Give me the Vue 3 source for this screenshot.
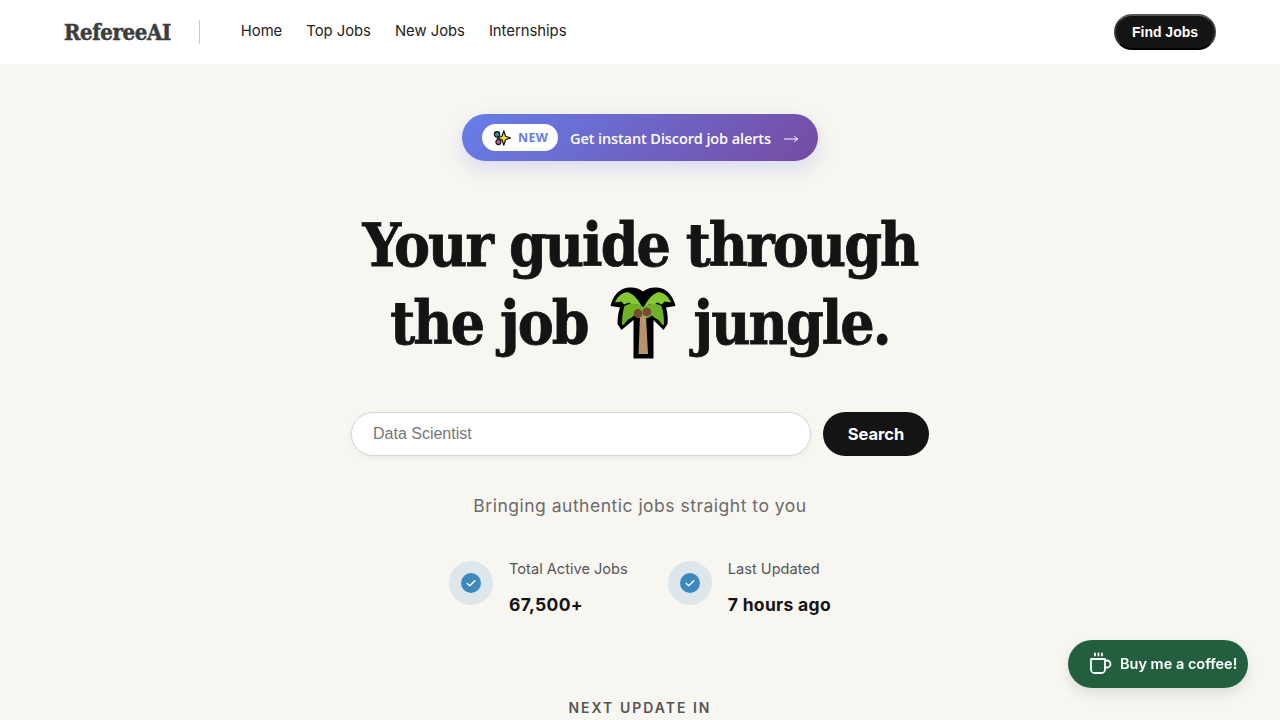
<script setup>
const links = ['Home', 'Top Jobs', 'New Jobs', 'Internships']
const stats = [
  { label: 'Total Active Jobs', value: '67,500+' },
  { label: 'Last Updated', value: '7 hours ago' }
]
</script>

<template>
  <div class="page">
    <header class="topbar">
      <div class="left">
        <span class="logo">RefereeAI</span>
        <span class="divider"></span>
        <nav class="links">
          <a v-for="link in links" :key="link" href="#">{{ link }}</a>
        </nav>
      </div>
      <button class="find-btn">Find Jobs</button>
    </header>

    <main class="hero">
      <a class="promo" href="#">
        <span class="new-tag">
          <svg class="sparkle" viewBox="0 0 20 20" width="18" height="18">
            <circle cx="4.5" cy="6" r="3" fill="#2f8f9d" stroke="#111" stroke-width="1.3" />
            <circle cx="6" cy="14.5" r="2.8" fill="#d14fa0" stroke="#111" stroke-width="1.3" />
            <path d="M12 2 L13.9 8 L19.5 10 L13.9 12 L12 18 L10.1 12 L4.5 10 L10.1 8 Z" fill="#fde030" stroke="#111" stroke-width="1.3" stroke-linejoin="round" />
          </svg>
          <span>NEW</span>
        </span>
        <span class="promo-text">Get instant Discord job alerts</span>
        <svg class="arrow" viewBox="0 0 14 10" width="14" height="10" fill="none" stroke="#fff" stroke-width="1" stroke-linecap="round" stroke-linejoin="round">
          <path d="M0.5 5 H13.5 M10.5 2.5 L13.5 5 L10.5 7.5" />
        </svg>
      </a>

      <h1 class="title">
        <span>Your guide through</span>
        <span class="line-two">
          the job
          <svg class="palm" viewBox="0 0 66 72" width="66" height="72">
            <path d="M33 4.5 C29 1 24 0 19 0.5 C10 1 3 8 0.5 19 L10 20.5 C8 26 7.5 32 7.5 37 L11.5 43 L23.5 33 L23.5 71.5 H43.5 L43.5 33 L53.5 43 L57.5 37 C58 30 57.5 26 56 20.5 L65.5 19 C63 8 56 1 47 0.5 C42 0 37 1 33 4.5 Z" fill="#000" />
            <path d="M32.5 21 C28 11 22 6.5 17.5 5 C11.5 6 7 10 5 15.5 L11.5 14.5 L14 17.5 L19 15.5 L22 18 L26.5 17 Z" fill="#86c832" />
            <path d="M33.5 21 C38 11 44 6.5 48.5 5 C54.5 6 59 10 61 15.5 L54.5 14.5 L52 17.5 L47 15.5 L44 18 L39.5 17 Z" fill="#86c832" />
            <path d="M33 20 C25 15 18 16.5 14.5 19 C12.5 25 12 31 12 37 L13 38.5 L18 32.5 L21 31 L24 28.5 L28 31 L38 31 L42 28.5 L45 31 L48 32.5 L53 38.5 L54 37 C54 31 53.5 25 51.5 19 C48 16.5 41 15 33 20 Z" fill="#6fb228" />
            <path d="M30 29 L28.5 67 H38 L36 29 Z" fill="#b8936a" />
            <circle cx="28" cy="26.5" r="4.4" fill="#7a4a32" />
            <circle cx="37" cy="25" r="4.4" fill="#7a4a32" />
          </svg>
          <span class="last-word">jungle.</span>
        </span>
      </h1>

      <form class="search" @submit.prevent>
        <input class="search-input" type="text" placeholder="Data Scientist" />
        <button class="search-btn" type="submit">Search</button>
      </form>

      <p class="tagline">Bringing authentic jobs straight to you</p>

      <div class="stats">
        <div v-for="stat in stats" :key="stat.label" class="stat">
          <span class="halo">
            <svg viewBox="0 0 20 20" width="20" height="20">
              <circle cx="10" cy="10" r="10" fill="#3d89bf" />
              <path d="M6.2 10.4 L8.8 12.8 L13.8 7.8" fill="none" stroke="#fff" stroke-width="1.4" stroke-linecap="round" stroke-linejoin="round" />
            </svg>
          </span>
          <div class="stat-text">
            <span class="stat-label">{{ stat.label }}</span>
            <strong class="stat-value">{{ stat.value }}</strong>
          </div>
        </div>
      </div>

      <p class="next-update">NEXT UPDATE IN</p>
    </main>

    <a class="coffee" href="#">
      <svg viewBox="0 0 24 24" width="24" height="24" fill="none" stroke="#fff" stroke-width="1.8" stroke-linecap="round" stroke-linejoin="round">
        <path d="M2 7 H16 V17.5 A3.5 3.5 0 0 1 12.5 21 H5.5 A3.5 3.5 0 0 1 2 17.5 Z" />
        <path d="M16 8.5 H18 A3 3 0 0 1 18 15.5 H16" />
        <path d="M6 1.5 V3.5 M9.5 1.5 V3.5 M13 1.5 V3.5" />
      </svg>
      <span>Buy me a coffee!</span>
    </a>
  </div>
</template>

<style>
html, body {
  margin: 0;
  overflow: hidden;
}
</style>

<style scoped>
.page {
  height: 720px;
  overflow: hidden;
  background: #f8f6f1;
  font-family: Inter, "Open Sans", sans-serif;
  color: #141414;
}
.topbar {
  height: 64px;
  background: #fff;
  display: flex;
  align-items: center;
  justify-content: space-between;
  padding: 0 64px;
}
.left {
  display: flex;
  align-items: center;
}
.logo {
  font-family: "DejaVu Serif Condensed", "DejaVu Serif", serif;
  font-weight: 700;
  font-size: 22px;
  letter-spacing: -0.4px;
  color: #3d3d3d;
  -webkit-text-stroke: 0.5px #3d3d3d;
}
.divider {
  width: 1px;
  height: 24px;
  background: #c9c9c9;
  margin: 0 41px 0 28px;
}
.links {
  display: flex;
  gap: 24px;
  margin-top: -2px;
}
.links a {
  font-size: 14.8px;
  color: #222;
  text-decoration: none;
}
.find-btn {
  width: 102px;
  height: 36px;
  border-radius: 18px;
  border: 2px solid #3a3a3a;
  border-top-color: #555;
  border-bottom-color: #000;
  background: #141414;
  color: #fff;
  font-family: "Liberation Sans", Arial, sans-serif;
  font-weight: 700;
  font-size: 14px;
  padding: 0;
}
.hero {
  display: flex;
  flex-direction: column;
  align-items: center;
  padding-top: 50px;
}
.promo {
  width: 356px;
  height: 47px;
  box-sizing: border-box;
  border-radius: 24px;
  padding-left: 20px;
  display: flex;
  align-items: center;
  background: linear-gradient(135deg, #667eea 0%, #764ba2 100%);
  box-shadow: 0 8px 20px rgba(102, 126, 234, 0.22);
  color: #fff;
  text-decoration: none;
  font-family: "Open Sans", sans-serif;
}
.new-tag {
  width: 76px;
  height: 27px;
  box-sizing: border-box;
  border-radius: 14px;
  background: #fff;
  display: flex;
  align-items: center;
  padding-left: 11px;
  gap: 7px;
  color: #667eea;
  font-size: 12.5px;
  font-weight: 700;
  letter-spacing: 0.3px;
  line-height: 29px;
}
.promo-text {
  margin-left: 12px;
  font-size: 14.5px;
  font-weight: 600;
  letter-spacing: -0.1px;
  line-height: 20px;
  padding-top: 2px;
}
.arrow {
  margin: 3px 0 0 13px;
  flex: none;
}
.title {
  margin: 45px 0 0;
  display: flex;
  flex-direction: column;
  align-items: center;
  font-family: "DejaVu Serif Condensed", "DejaVu Serif", serif;
  font-weight: 700;
  font-size: 60px;
  line-height: 78px;
  letter-spacing: -1.9px;
  color: #141414;
  -webkit-text-stroke: 0.8px #141414;
}
.line-two {
  display: flex;
  align-items: center;
  gap: 22px;
}
.palm {
  flex: none;
}
.last-word {
  margin-left: -4px;
}
.search {
  margin-top: 50px;
  display: flex;
  gap: 12px;
}
.search-input {
  width: 460px;
  height: 44px;
  box-sizing: border-box;
  border: 1px solid #d6d6d6;
  border-radius: 22px;
  padding: 0 21px;
  background: #fff;
  box-shadow: 0 2px 6px rgba(0, 0, 0, 0.05);
  font-family: "Liberation Sans", Arial, sans-serif;
  font-size: 16px;
  outline: none;
}
.search-input::placeholder {
  color: #777;
}
.search-btn {
  width: 106px;
  height: 44px;
  border: none;
  border-radius: 22px;
  background: #141414;
  color: #fff;
  font-family: Inter, sans-serif;
  font-weight: 700;
  font-size: 16.5px;
  padding: 0;
}
.tagline {
  margin: 39px 0 0;
  font-size: 17.5px;
  line-height: 22px;
  letter-spacing: 0.5px;
  color: #6b6b6b;
}
.stats {
  margin-top: 44px;
  display: flex;
  gap: 40px;
}
.stat {
  display: flex;
  gap: 16px;
}
.halo {
  width: 44px;
  height: 44px;
  border-radius: 50%;
  background: #dde6ea;
  display: flex;
  align-items: center;
  justify-content: center;
  flex: none;
}
.stat-text {
  display: flex;
  flex-direction: column;
  gap: 16px;
  margin-top: -1px;
}
.stat-label {
  font-size: 14.6px;
  line-height: 18px;
  color: #555;
}
.stat-value {
  font-size: 17.5px;
  line-height: 22px;
  font-weight: 700;
  letter-spacing: 0.3px;
  color: #141414;
}
.next-update {
  margin: 83px 0 0;
  font-size: 14px;
  line-height: 18px;
  font-weight: 600;
  letter-spacing: 2px;
  color: #555;
}
.coffee {
  position: fixed;
  right: 32px;
  bottom: 32px;
  width: 180px;
  height: 48px;
  box-sizing: border-box;
  padding-left: 21px;
  border-radius: 24px;
  background: #235e3f;
  box-shadow: 0 6px 14px rgba(0, 0, 0, 0.1);
  display: flex;
  align-items: center;
  gap: 7px;
  color: #fff;
  text-decoration: none;
  font-size: 14.5px;
  font-weight: 600;
}
.coffee span {
  margin-top: -2px;
}
</style>
